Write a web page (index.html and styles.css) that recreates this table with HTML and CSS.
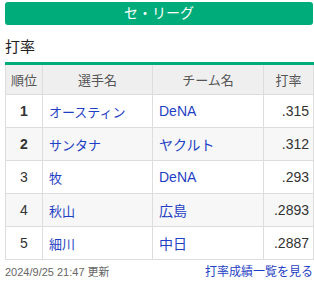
FILE: index.html
```html
<!DOCTYPE html>
<html lang="ja">
<head>
<meta charset="utf-8">
<link rel="stylesheet" href="styles.css">
</head>
<body>
<div class="wrap">
  <div class="league">セ・リーグ</div>
  <h2 class="title">打率</h2>
  <table class="rank">
    <thead>
      <tr><th class="c-rank">順位</th><th class="c-name">選手名</th><th class="c-team">チーム名</th><th class="c-avg">打率</th></tr>
    </thead>
    <tbody>
      <tr><td class="c-rank top">1</td><td class="c-name"><a href="#">オースティン</a></td><td class="c-team"><a href="#">DeNA</a></td><td class="c-avg">.315</td></tr>
      <tr class="alt"><td class="c-rank top">2</td><td class="c-name"><a href="#">サンタナ</a></td><td class="c-team"><a href="#">ヤクルト</a></td><td class="c-avg">.312</td></tr>
      <tr><td class="c-rank">3</td><td class="c-name"><a href="#">牧</a></td><td class="c-team"><a href="#">DeNA</a></td><td class="c-avg">.293</td></tr>
      <tr class="alt"><td class="c-rank">4</td><td class="c-name"><a href="#">秋山</a></td><td class="c-team"><a href="#">広島</a></td><td class="c-avg">.2893</td></tr>
      <tr><td class="c-rank">5</td><td class="c-name"><a href="#">細川</a></td><td class="c-team"><a href="#">中日</a></td><td class="c-avg">.2887</td></tr>
    </tbody>
  </table>
  <div class="foot">
    <span class="date">2024/9/25 21:47 更新</span>
    <a class="more" href="#">打率成績一覧を見る</a>
  </div>
</div>
</body>
</html>
```
FILE: styles.css
```css
html, body { margin: 0; padding: 0; background: #fff; }
body {
  font-family: "Liberation Sans", Arial, "Noto Sans CJK JP", sans-serif;
  color: #333;
}
.wrap { padding: 2px 1px 0 5px; }
.league {
  height: 23px;
  line-height: 23px;
  background: #00ac7a;
  color: #fff;
  text-align: center;
  font-size: 14px;
  border-radius: 3px;
}
.title {
  margin: 0;
  padding: 12px 0 5px;
  line-height: 20px;
  font-size: 15px;
  font-weight: normal;
  color: #222;
}
.rank {
  width: 100%;
  border-collapse: collapse;
  border-top: 3px solid #00ac7a;
  font-size: 13px;
  table-layout: fixed;
}
.rank th, .rank td {
  border: 1px solid #ddd;
  padding: 0 6px;
  box-sizing: border-box;
  white-space: nowrap;
}
.rank th {
  height: 31px;
  background: #efefef;
  color: #555;
  font-weight: normal;
  text-align: center;
  border-top: none;
}
.rank td { height: 33px; font-size: 14px; }
.rank td.c-name { font-size: 13px; }
.rank tr.alt td { background: #f7f7f7; }
.rank a { color: #1f3fc4; text-decoration: none; }
th.c-rank { width: 37px; padding: 0; }
th.c-name { width: 110px; }
th.c-team { width: 111px; }
th.c-avg { width: 50px; padding: 0; }
td.c-rank { text-align: center; padding: 0; color: #333; }
td.c-rank.top { font-weight: bold; }
td.c-name, td.c-team { text-align: left; }
td.c-avg { text-align: right; color: #333; padding: 0 4px 0 0; }
.foot {
  display: flex;
  justify-content: space-between;
  align-items: baseline;
  margin-top: 4px;
  line-height: 17px;
}
.date { font-size: 11px; color: #666; }
.more { font-size: 12px; color: #1f3fc4; text-decoration: none; }
```
